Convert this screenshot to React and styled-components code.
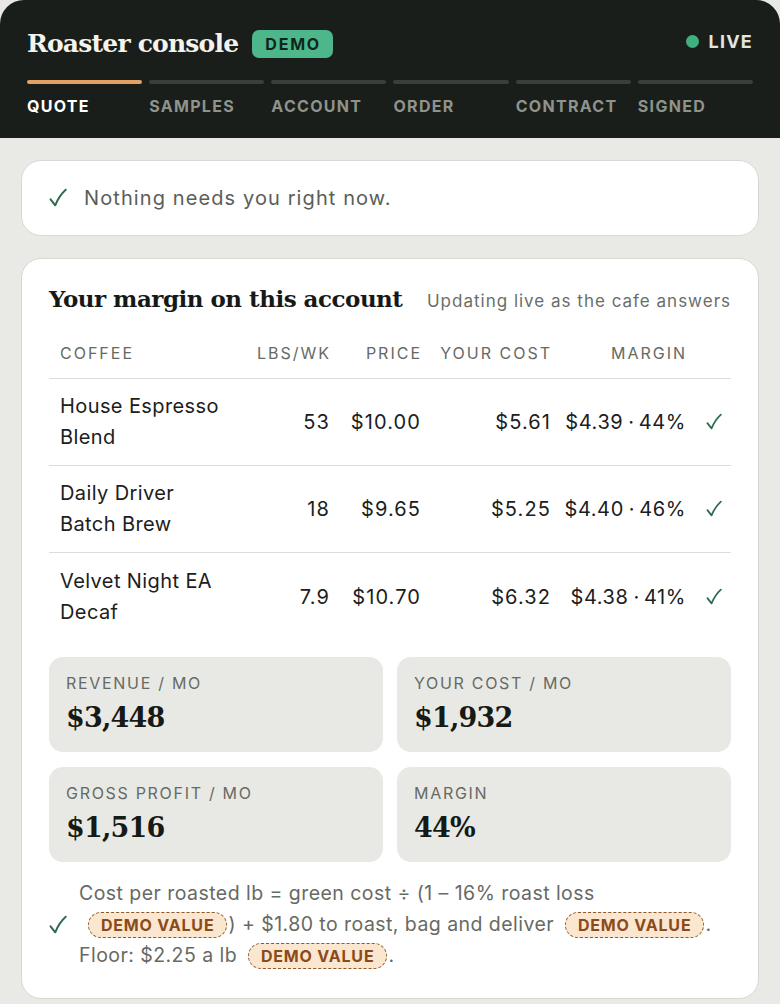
import styled, { createGlobalStyle } from "styled-components";

const GlobalStyle = createGlobalStyle`
  html, body { margin: 0; padding: 0; background: #e8e9e5; }
  body { font-family: Inter, "Noto Sans", sans-serif; color: #1c201c; }
  * { box-sizing: border-box; }
`;

const steps = ["Quote", "Samples", "Account", "Order", "Contract", "Signed"];

const coffees = [
  { name: ["House Espresso", "Blend"], lbs: "53", price: "$10.00", cost: "$5.61", margin: "$4.39", pct: "44%" },
  { name: ["Daily Driver", "Batch Brew"], lbs: "18", price: "$9.65", cost: "$5.25", margin: "$4.40", pct: "46%" },
  { name: ["Velvet Night EA", "Decaf"], lbs: "7.9", price: "$10.70", cost: "$6.32", margin: "$4.38", pct: "41%" },
];

const metrics = [
  { label: "Revenue / mo", value: "$3,448" },
  { label: "Your cost / mo", value: "$1,932" },
  { label: "Gross profit / mo", value: "$1,516" },
  { label: "Margin", value: "44%" },
];

function CheckIcon({ size = 18 }) {
  return (
    <CheckSvg width={size} height={size * 1.1} viewBox="0 0 18 20" aria-hidden="true">
      <path d="M1.5 11.5 L6.2 17.5 Q10 8 16.8 1.8" />
    </CheckSvg>
  );
}

function App() {
  return (
    <Shell>
      <GlobalStyle />
      <Header>
        <TitleRow>
          <Brand>
            <Title>Roaster console</Title>
            <DemoBadge>DEMO</DemoBadge>
          </Brand>
          <Live><Dot />LIVE</Live>
        </TitleRow>
        <Steps>
          {steps.map((s, i) => (
            <Step key={s}>
              <StepBar $active={i === 0} />
              <StepLabel $active={i === 0}>{s}</StepLabel>
            </Step>
          ))}
        </Steps>
      </Header>

      <Body>
        <Notice>
          <CheckIcon />
          Nothing needs you right now.
        </Notice>

        <Card>
          <CardHead>
            <CardTitle>Your margin on this account</CardTitle>
            <CardNote>Updating live as the cafe answers</CardNote>
          </CardHead>

          <Table>
            <HeadRow>
              <Th>Coffee</Th>
              <Th $right>Lbs/wk</Th>
              <Th $right>Price</Th>
              <Th $right>Your cost</Th>
              <Th $right>Margin</Th>
              <Th />
            </HeadRow>
            {coffees.map((c) => (
              <Row key={c.name[0]}>
                <Name>{c.name[0]}<br />{c.name[1]}</Name>
                <Td>{c.lbs}</Td>
                <Td>{c.price}</Td>
                <Td>{c.cost}</Td>
                <MarginCell>{c.margin}<Sep>·</Sep>{c.pct}</MarginCell>
                <CheckCell><CheckIcon size={16} /></CheckCell>
              </Row>
            ))}
          </Table>

          <Metrics>
            {metrics.map((m) => (
              <Metric key={m.label}>
                <MetricLabel>{m.label}</MetricLabel>
                <MetricValue>{m.value}</MetricValue>
              </Metric>
            ))}
          </Metrics>

          <Footnote>
            <CheckIcon />
            <FootText>
              Cost per roasted lb = green cost ÷ (1 – 16% roast loss{" "}
              <DemoValue $lead>DEMO VALUE</DemoValue>) + $1.80 to roast, bag and deliver{" "}
              <DemoValue>DEMO VALUE</DemoValue>. Floor: $2.25 a lb{" "}
              <DemoValue>DEMO VALUE</DemoValue>.
            </FootText>
          </Footnote>
        </Card>
      </Body>
    </Shell>
  );
}

const CheckSvg = styled.svg`
  flex: none;
  fill: none;
  stroke: #2e6b4f;
  stroke-width: 2;
  stroke-linecap: round;
  stroke-linejoin: round;
`;

const Shell = styled.div`
  border-radius: 24px 24px 0 0;
  overflow: hidden;
  background: #e9eae6;
  min-height: 1004px;
`;

const Header = styled.header`
  background: #1a1e1a;
  padding: 29px 27px 22px;
`;

const TitleRow = styled.div`
  display: flex;
  align-items: center;
  justify-content: space-between;
  height: 29px;
`;

const Brand = styled.div`
  display: flex;
  align-items: center;
  gap: 14px;
`;

const Title = styled.h1`
  margin: 0;
  font-family: "DejaVu Serif", "Liberation Serif", serif;
  font-weight: 700;
  font-size: 25px;
  letter-spacing: -0.8px;
  color: #f4f3ee;
  line-height: 28px;
`;

const DemoBadge = styled.span`
  background: #4db68a;
  color: #10261b;
  font-weight: 700;
  font-size: 16px;
  letter-spacing: 1.8px;
  border-radius: 7px;
  height: 28px;
  padding: 0 12px 0 13px;
  display: inline-flex;
  align-items: center;
`;

const Live = styled.div`
  display: flex;
  align-items: center;
  gap: 10px;
  color: #e3e6df;
  font-weight: 700;
  font-size: 18px;
  letter-spacing: 1.2px;
  margin-top: -4px;
`;

const Dot = styled.span`
  width: 13px;
  height: 13px;
  border-radius: 50%;
  background: #3fb07f;
`;

const Steps = styled.div`
  display: grid;
  grid-template-columns: repeat(6, 1fr);
  gap: 7px;
  margin-top: 22px;
`;

const Step = styled.div`
  display: flex;
  flex-direction: column;
`;

const StepBar = styled.div`
  height: 4px;
  border-radius: 2px;
  background: ${(p) => (p.$active ? "#e2a063" : "#3a3f3a")};
`;

const StepLabel = styled.div`
  margin-top: 12px;
  font-size: 16px;
  line-height: 20px;
  font-weight: 700;
  text-transform: uppercase;
  letter-spacing: 1.3px;
  color: ${(p) => (p.$active ? "#ffffff" : "#8e938c")};
`;

const Body = styled.main`
  padding: 22px 21px 6px;
  display: flex;
  flex-direction: column;
  gap: 22px;
`;

const Notice = styled.div`
  background: #fff;
  border: 1px solid #d6d8d2;
  border-radius: 20px;
  height: 76px;
  padding: 0 27px;
  display: flex;
  align-items: center;
  gap: 17px;
  font-size: 20px;
  letter-spacing: 1.1px;
  color: #5a5e58;
`;

const Card = styled.section`
  background: #fff;
  border: 1px solid #d6d8d2;
  border-radius: 20px;
  padding: 25px 27px 27px;
`;

const CardHead = styled.div`
  display: flex;
  align-items: baseline;
  justify-content: space-between;
`;

const CardTitle = styled.h2`
  margin: 0;
  font-family: "DejaVu Serif", "Liberation Serif", serif;
  font-weight: 700;
  font-size: 23px;
  letter-spacing: -0.5px;
  line-height: 30px;
  color: #161a16;
`;

const CardNote = styled.span`
  font-size: 17px;
  letter-spacing: 1px;
  color: #6a6e68;
`;

const Table = styled.div`
  margin-top: 14px;
  display: flex;
  flex-direction: column;
`;

const cols = "202px 78px 91px 130px 135px 48px";

const HeadRow = styled.div`
  display: grid;
  grid-template-columns: ${cols};
  height: 51px;
  align-items: center;
  border-bottom: 1.5px solid #dcddd8;
`;

const Th = styled.div`
  font-size: 16px;
  text-transform: uppercase;
  letter-spacing: 2px;
  color: #666a64;
  text-align: ${(p) => (p.$right ? "right" : "left")};
  padding-left: ${(p) => (p.$right ? "0" : "11px")};
  margin-right: ${(p) => (p.$right ? "-2px" : "0")};
`;

const Row = styled.div`
  display: grid;
  grid-template-columns: ${cols};
  height: 87px;
  align-items: center;
  font-size: 20px;
  letter-spacing: 1.1px;
  color: #1c201c;
  border-bottom: 1.5px solid #dcddd8;
  &:last-child { border-bottom: none; }
`;

const Name = styled.div`
  padding-left: 11px;
  line-height: 31px;
  letter-spacing: 0.4px;
`;

const Td = styled.div`
  text-align: right;
  margin-right: -1px;
`;

const MarginCell = styled.div`
  text-align: right;
  letter-spacing: 0.6px;
  margin-right: -1px;
`;

const Sep = styled.span`
  margin: 0 4px 0 5px;
`;

const CheckCell = styled.div`
  display: flex;
  justify-content: flex-end;
  padding-right: 11px;
`;

const Metrics = styled.div`
  margin-top: 17px;
  display: grid;
  grid-template-columns: 1fr 1fr;
  gap: 15px 14px;
`;

const Metric = styled.div`
  background: #e8e9e5;
  border-radius: 14px;
  height: 95px;
  padding: 16px 17px;
`;

const MetricLabel = styled.div`
  font-size: 16px;
  text-transform: uppercase;
  letter-spacing: 1.7px;
  color: #666a64;
`;

const MetricValue = styled.div`
  margin-top: 9px;
  font-family: "DejaVu Serif", "Liberation Serif", serif;
  font-weight: 700;
  font-size: 27px;
  letter-spacing: -0.8px;
  color: #161a16;
`;

const Footnote = styled.div`
  margin-top: 16px;
  display: flex;
  align-items: center;
  gap: 12px;
`;

const FootText = styled.p`
  margin: 0;
  font-size: 19.5px;
  line-height: 31px;
  letter-spacing: 0.45px;
  color: #666a64;
`;

const DemoValue = styled.span`
  display: inline-block;
  margin: 0 1px 0 ${(p) => (p.$lead ? "9px" : "5px")};
  padding: 0 12px;
  line-height: 24px;
  border: 1.5px dashed #8a5a30;
  border-radius: 13px;
  background: #fbe6d0;
  color: #8a4a1a;
  font-size: 16px;
  font-weight: 700;
  letter-spacing: 0.8px;
`;

export default App;
